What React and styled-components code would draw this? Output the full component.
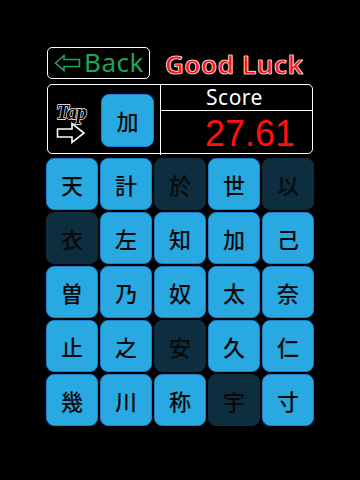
import React from "react";
import styled, { createGlobalStyle } from "styled-components";

const Global = createGlobalStyle`
  html, body { margin: 0; padding: 0; background: #000; }
  body { width: 360px; height: 480px; overflow: hidden; font-family: "Liberation Sans", Arial, sans-serif; }
`;

const Page = styled.div`
  width: 360px;
  height: 480px;
  background: #000;
  box-sizing: border-box;
  padding: 47px 46px 0 46px;
  display: flex;
  flex-direction: column;
`;

const TopBar = styled.div`
  display: flex;
  align-items: center;
  height: 31px;
  padding-left: 1px;
  gap: 15px;
`;

const BackButton = styled.button`
  width: 103px;
  height: 32px;
  box-sizing: border-box;
  border: 1.5px solid #fff;
  border-radius: 5px;
  background: #000;
  display: flex;
  align-items: center;
  gap: 3px;
  padding: 0 0 0 6px;
  color: #1ea556;
  font-family: "Noto Sans", "DejaVu Sans", sans-serif;
  font-size: 26px;
  line-height: 1;
  letter-spacing: 0.5px;
`;

const BackLabel = styled.span`
  position: relative;
  top: -1px;
`;

const Title = styled.div`
  color: #ff1414;
  font-family: "Noto Sans", "DejaVu Sans", sans-serif;
  font-weight: 600;
  font-size: 26px;
  letter-spacing: 0.6px;
  -webkit-text-stroke: 0.5px #fff;
  text-shadow: 0 0 1px #fff, 0 0 1px #fff;
  padding-top: 2px;
`;

const ScorePanel = styled.div`
  margin-top: 6px;
  margin-left: 1px;
  width: 266px;
  height: 70px;
  box-sizing: border-box;
  border: 1.5px solid #fff;
  border-radius: 5px;
  display: grid;
  grid-template-columns: 113px 1fr;
`;

const LeftCell = styled.div`
  border-right: 1.5px solid #fff;
  display: flex;
  align-items: center;
  padding-left: 8px;
  gap: 7px;
`;

const TapMark = styled.div`
  display: flex;
  flex-direction: column;
  align-items: flex-start;
  width: 38px;
  margin-top: 8px;
  gap: 2px;
`;

const TapText = styled.span`
  font-family: "Liberation Serif", "DejaVu Serif", serif;
  font-weight: 700;
  font-style: italic;
  font-size: 21px;
  line-height: 16px;
  color: #000;
  -webkit-text-stroke: 1.3px #fff;
  paint-order: stroke fill;
  letter-spacing: -0.5px;
`;

const RightCell = styled.div`
  display: grid;
  grid-template-rows: 26px 1fr;
`;

const ScoreHead = styled.div`
  border-bottom: 1.5px solid #fff;
  color: #fff;
  font-family: "Noto Sans", "DejaVu Sans", sans-serif;
  font-size: 21px;
  line-height: 1;
  letter-spacing: 0.5px;
  display: flex;
  align-items: center;
  justify-content: center;
  padding-right: 4px;
`;

const ScoreValue = styled.div`
  color: #ff1010;
  font-family: "Liberation Sans", Arial, sans-serif;
  font-size: 36px;
  display: flex;
  align-items: center;
  justify-content: flex-end;
  padding-right: 17px;
  padding-top: 2px;
`;

const Tile = styled.div`
  width: ${(p) => p.$size || 52}px;
  height: ${(p) => p.$size || 52}px;
  box-sizing: border-box;
  border-radius: 8px;
  background: ${(p) => (p.$dim ? "#0c2e3f" : "#29a9e2")};
  border: 1.5px solid ${(p) => (p.$dim ? "#0c2e3f" : "#1d7fce")};
  display: flex;
  align-items: center;
  justify-content: center;
  font-family: "Noto Sans CJK JP", "Noto Sans CJK SC", sans-serif;
  font-weight: 500;
  font-size: 22px;
  color: #0a0a0a;
`;

const Grid = styled.div`
  margin-top: 4px;
  display: grid;
  grid-template-columns: repeat(5, 52px);
  grid-auto-rows: 52px;
  gap: 2px;
`;

const rows = [
  [["天"], ["計"], ["於", 1], ["世"], ["以", 1]],
  [["衣", 1], ["左"], ["知"], ["加"], ["己"]],
  [["曽"], ["乃"], ["奴"], ["太"], ["奈"]],
  [["止"], ["之"], ["安", 1], ["久"], ["仁"]],
  [["幾"], ["川"], ["称"], ["宇", 1], ["寸"]],
];

function BackArrow() {
  return (
    <svg width="27" height="18" viewBox="0 0 27 18">
      <path
        d="M1.5 9 L10 1.5 L10 5.5 L25.5 5.5 L25.5 12.5 L10 12.5 L10 16.5 Z"
        fill="none"
        stroke="#1ea556"
        strokeWidth="1.6"
        strokeLinejoin="miter"
      />
    </svg>
  );
}

function TapArrow() {
  return (
    <svg width="30" height="22" viewBox="0 0 30 22">
      <path
        d="M1.5 7 L16 7 L16 1.5 L28 11 L16 20.5 L16 15 L1.5 15 Z"
        fill="none"
        stroke="#fff"
        strokeWidth="1.6"
      />
    </svg>
  );
}

export default function App() {
  return (
    <>
      <Global />
      <Page>
        <TopBar>
          <BackButton>
            <BackArrow />
            <BackLabel>Back</BackLabel>
          </BackButton>
          <Title>Good Luck</Title>
        </TopBar>
        <ScorePanel>
          <LeftCell>
            <TapMark>
              <TapText>Tap</TapText>
              <TapArrow />
            </TapMark>
            <Tile $size={53}>加</Tile>
          </LeftCell>
          <RightCell>
            <ScoreHead>Score</ScoreHead>
            <ScoreValue>27.61</ScoreValue>
          </RightCell>
        </ScorePanel>
        <Grid>
          {rows.flat().map(([ch, dim], i) => (
            <Tile key={i} $dim={!!dim}>
              {ch}
            </Tile>
          ))}
        </Grid>
      </Page>
    </>
  );
}
